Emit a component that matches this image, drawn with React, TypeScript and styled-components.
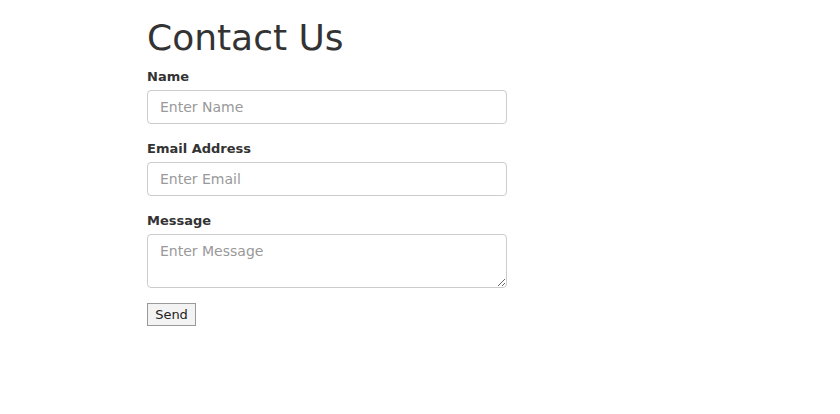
import React from "react";
import styled, { createGlobalStyle } from "styled-components";

const Global = createGlobalStyle`
  html, body { margin: 0; padding: 0; background: #fff; }
  body { font-family: "DejaVu Sans", Verdana, sans-serif; color: #333; }
  * { box-sizing: border-box; }
`;

const Page = styled.div`
  padding: 14px 0 0 147px;
`;

const Form = styled.form`
  width: 360px;
  display: flex;
  flex-direction: column;
`;

const Title = styled.h1`
  margin: 0 0 6px;
  font-size: 36px;
  font-weight: 400;
  line-height: 48px;
  color: #333;
`;

const Field = styled.div<{ $last?: boolean }>`
  display: flex;
  flex-direction: column;
  margin-bottom: ${(p) => (p.$last ? "15px" : "16px")};
`;

const Label = styled.label`
  font-size: 13px;
  font-weight: 700;
  color: #333;
  line-height: 18px;
  margin-bottom: 4px;
`;

const Input = styled.input`
  width: 360px;
  height: 34px;
  padding: 6px 12px;
  border: 1px solid #ccc;
  border-radius: 4px;
  font-family: inherit;
  font-size: 14px;
  color: #555;
  &::placeholder { color: #999; }
`;

const TextArea = styled.textarea`
  width: 360px;
  height: 54px;
  padding: 8px 12px 6px;
  border: 1px solid #ccc;
  border-radius: 4px;
  font-family: inherit;
  font-size: 14px;
  color: #555;
  resize: both;
  &::placeholder { color: #999; }
`;

const Button = styled.button`
  align-self: flex-start;
  width: 49px;
  height: 23px;
  padding: 0;
  border: 1px solid #999;
  background: #f3f3f3;
  font-family: inherit;
  font-size: 13px;
  color: #222;
`;

export default function App() {
  return (
    <>
      <Global />
      <Page>
        <Form onSubmit={(e) => e.preventDefault()}>
          <Title>Contact Us</Title>
          <Field>
            <Label>Name</Label>
            <Input placeholder="Enter Name" />
          </Field>
          <Field>
            <Label>Email Address</Label>
            <Input placeholder="Enter Email" />
          </Field>
          <Field $last>
            <Label>Message</Label>
            <TextArea placeholder="Enter Message" />
          </Field>
          <Button type="submit">Send</Button>
        </Form>
      </Page>
    </>
  );
}
